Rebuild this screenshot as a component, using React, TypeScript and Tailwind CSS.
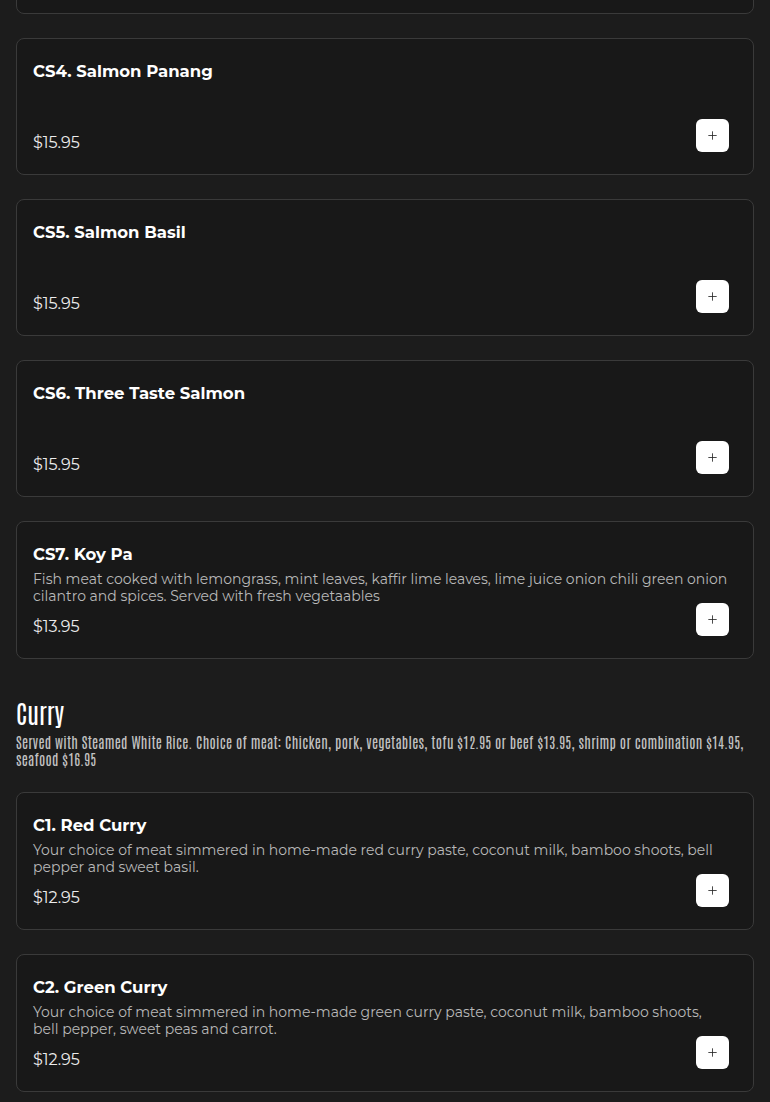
import { Plus } from "lucide-react";

type Item = {
  name: string;
  desc?: string;
  price: string;
};

const seafood: Item[] = [
  { name: "CS3. Salmon Garlic", price: "$15.95" },
  { name: "CS4. Salmon Panang", price: "$15.95" },
  { name: "CS5. Salmon Basil", price: "$15.95" },
  { name: "CS6. Three Taste Salmon", price: "$15.95" },
  {
    name: "CS7. Koy Pa",
    desc: "Fish meat cooked with lemongrass, mint leaves, kaffir lime leaves, lime juice onion chili green onion cilantro and spices. Served with fresh vegetaables",
    price: "$13.95",
  },
];

const curry: Item[] = [
  {
    name: "C1. Red Curry",
    desc: "Your choice of meat simmered in home-made red curry paste, coconut milk, bamboo shoots, bell pepper and sweet basil.",
    price: "$12.95",
  },
  {
    name: "C2. Green Curry",
    desc: "Your choice of meat simmered in home-made green curry paste, coconut milk, bamboo shoots, bell pepper, sweet peas and carrot.",
    price: "$12.95",
  },
];

const body = "font-['Montserrat','Open_Sans','Noto_Sans',sans-serif]";
const narrow =
  "font-['Antonio','Oswald','Bebas_Neue','Roboto_Condensed','Liberation_Sans_Narrow','DejaVu_Sans_Condensed',sans-serif] font-stretch-condensed";

function MenuCard({ item }: { item: Item }) {
  return (
    <div className={`rounded-lg border border-[#3a3a3a] bg-[#181818] pt-[20px] pl-4 pr-6 pb-[19px] ${body}`}>
      <h3 className="h-6 text-[16.5px] leading-6 font-bold text-white">{item.name}</h3>
      <p className="mt-[5px] min-h-8 text-[14px] leading-[16.5px] text-[#b9b9b9]">{item.desc}</p>
      <div className="mt-[11px] flex h-6 items-center justify-between">
        <span className="text-[16px] leading-6 text-[#ececec]">{item.price}</span>
        <button className="mb-4 flex h-[33px] w-[33px] shrink-0 items-center justify-center rounded-md bg-white text-[#222]">
          <Plus size={13} strokeWidth={1.5} />
        </button>
      </div>
    </div>
  );
}

export default function App() {
  return (
    <div className="min-h-screen overflow-hidden bg-[#1c1c1c] px-4">
      <div className="-mt-[123px] flex flex-col gap-6">
        {seafood.map((item) => (
          <MenuCard key={item.name} item={item} />
        ))}
      </div>

      <div className="mt-[37px]">
        <h2 className={`text-[25px] leading-8 text-white ${narrow}`}>Curry</h2>
        <p className={`mt-[6px] text-[14px] leading-[17px] font-normal tracking-[0.26px] text-[#c2c2c2] ${narrow}`}>
          Served with Steamed White Rice. Choice of meat: Chicken, pork, vegetables, tofu $12.95 or beef $13.95, shrimp or combination $14.95, seafood $16.95
        </p>
      </div>

      <div className="mt-6 flex flex-col gap-6 pb-6">
        {curry.map((item) => (
          <MenuCard key={item.name} item={item} />
        ))}
      </div>
    </div>
  );
}
